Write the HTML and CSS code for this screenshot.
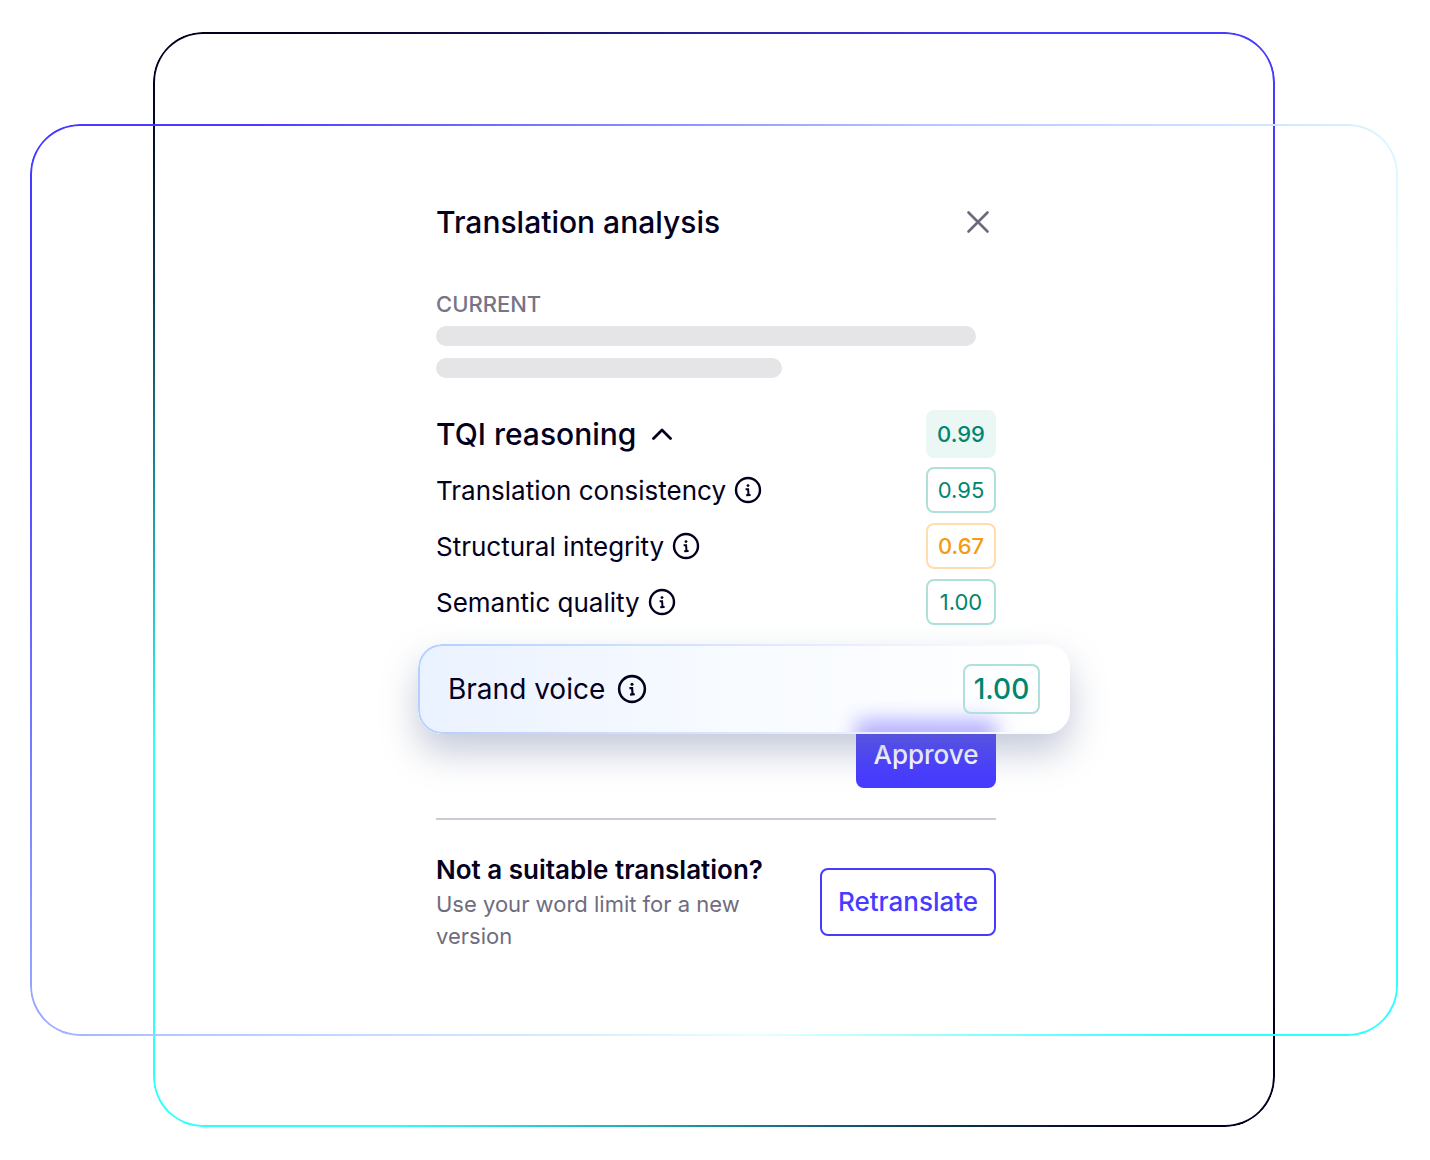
FILE: index.html
```html
<!DOCTYPE html>
<html lang="en">
<head>
  <meta charset="UTF-8">
  <meta name="viewport" content="width=device-width, initial-scale=1.0">
  <title>Translation analysis</title>
  <link rel="stylesheet" href="styles.css">
</head>
<body>

  <!-- Info icon, reused by every score row -->
  <svg class="sprite" aria-hidden="true">
    <symbol id="icon-info" viewBox="0 0 28 28">
      <circle cx="14" cy="14" r="12" fill="none" stroke="currentColor" stroke-width="2.4" />
      <circle cx="14" cy="9.6" r="1.4" fill="currentColor" />
      <path d="M11.6 13.2h2.5l.4 5.8M12.2 19.2l4.4-.3" fill="none" stroke="currentColor" stroke-width="2" />
    </symbol>
  </svg>

  <main class="stage">
    <div class="frame frame-tall"></div>
    <div class="frame frame-wide"></div>

    <section class="panel">
      <header class="panel-header">
        <h1>Translation analysis</h1>
        <button class="icon-button" type="button" aria-label="Close">
          <svg class="icon-close" viewBox="0 0 24 24"><path d="M2.5 2.5l19 19M21.5 2.5l-19 19" /></svg>
        </button>
      </header>

      <!-- Current translation -->
      <h2 class="label">CURRENT</h2>
      <div class="skeleton">
        <span class="bar bar-long"></span>
        <span class="bar bar-short"></span>
      </div>

      <!-- Scores -->
      <div class="row row-total">
        <h2>
          <button class="toggle" type="button" aria-expanded="true">
            TQI reasoning
            <svg class="icon-chevron" viewBox="0 0 20 12"><path d="M1.5 10.5L10 2l8.5 8.5" /></svg>
          </button>
        </h2>
        <span class="score score-total">0.99</span>
      </div>
      <ul class="scores">
        <li class="row">
          <span>Translation consistency</span>
          <button class="icon-button" type="button" aria-label="About translation consistency"><svg class="icon-info"><use href="#icon-info" /></svg></button>
          <span class="score">0.95</span>
        </li>
        <li class="row">
          <span>Structural integrity</span>
          <button class="icon-button" type="button" aria-label="About structural integrity"><svg class="icon-info"><use href="#icon-info" /></svg></button>
          <span class="score score-warning">0.67</span>
        </li>
        <li class="row">
          <span>Semantic quality</span>
          <button class="icon-button" type="button" aria-label="About semantic quality"><svg class="icon-info"><use href="#icon-info" /></svg></button>
          <span class="score">1.00</span>
        </li>
        <li class="row row-highlight">
          <span>Brand voice</span>
          <button class="icon-button" type="button" aria-label="About brand voice"><svg class="icon-info"><use href="#icon-info" /></svg></button>
          <span class="score">1.00</span>
        </li>
      </ul>

      <button class="button button-primary" type="button">Approve</button>

      <!-- Retranslate -->
      <footer class="panel-footer">
        <div class="hint">
          <h3>Not a suitable translation?</h3>
          <p>Use your word limit for a new version</p>
        </div>
        <button class="button button-outline" type="button">Retranslate</button>
      </footer>
    </section>
  </main>

</body>
</html>
```
FILE: styles.css
```css
* {
  box-sizing: border-box;
}

body {
  margin: 0;
  font-family: Inter, "Liberation Sans", sans-serif;
  color: #03001e;
  background: #fff;
}

h1, h2, h3, p, ul {
  margin: 0;
  padding: 0;
}

button {
  font: inherit;
  color: inherit;
  background: none;
  border: 0;
  padding: 0;
  cursor: pointer;
}

.sprite {
  display: none;
}

/* Stage with the two crossing outlines */
.stage {
  display: grid;
  grid-template-columns: 123px 1fr 123px;
  grid-template-rows: 92px auto 91px;
  padding: 32px 32px 32px 30px;
}

.frame {
  padding: 2px;
  border-radius: 50px;
  mask: linear-gradient(#000 0 0) content-box exclude, linear-gradient(#000 0 0);
  pointer-events: none;
}

.frame-tall {
  grid-area: 1 / 2 / 4 / 3;
  background: conic-gradient(from 45deg, #473bff 0%, #473bff 5%, #03001e 23%, #03001e 27%, #2fffff 46%, #2fffff 58%, #03001e 74%, #03001e 77%, #473bff 96%);
}

.frame-wide {
  grid-area: 2 / 1 / 3 / 4;
  background: linear-gradient(130deg, #473bff 10%, #b0c8ff 42%, #e6ffff 70%, #2fffff 90%);
}

/* Panel */
.panel {
  grid-area: 2 / 2 / 3 / 3;
  justify-self: center;
  display: flex;
  flex-direction: column;
  width: 100%;
  max-width: 564px;
  padding: 78px 0 84px 4px;
}

.panel-header {
  display: flex;
  justify-content: space-between;
  align-items: center;
  height: 40px;
  padding-right: 6px;
}

h1 {
  font-size: 30px;
  font-weight: 500;
}

.icon-button {
  display: flex;
}

.icon-close {
  width: 24px;
  height: 24px;
  fill: none;
  stroke: #6b697b;
  stroke-width: 2.6;
  stroke-linecap: round;
}

.label {
  margin-top: 46px;
  font-size: 22px;
  font-weight: 500;
  line-height: 32px;
  color: #777388;
}

.skeleton {
  display: flex;
  flex-direction: column;
  gap: 12px;
  margin-top: 6px;
}

.bar {
  height: 20px;
  border-radius: 10px;
  background: #e5e5e8;
}

.bar-long {
  width: 540px;
}

.bar-short {
  width: 346px;
}

/* Scores */
.scores {
  display: flex;
  flex-direction: column;
  gap: 10px;
  margin-top: 9px;
  list-style: none;
}

.row {
  display: flex;
  align-items: center;
  gap: 8px;
  font-size: 26px;
}

.row-total {
  margin-top: 32px;
}

.row-total h2 {
  font-size: 30px;
  font-weight: 500;
}

.toggle {
  display: flex;
  align-items: center;
  gap: 16px;
}

.icon-chevron {
  width: 20px;
  height: 12px;
  fill: none;
  stroke: currentColor;
  stroke-width: 2.8;
  stroke-linecap: round;
  stroke-linejoin: round;
}

.icon-info {
  width: 28px;
  height: 28px;
}

.score {
  display: flex;
  justify-content: center;
  align-items: center;
  width: 70px;
  height: 46px;
  margin-left: auto;
  border: 2px solid #b0e0da;
  border-radius: 8px;
  font-size: 22px;
  color: #008670;
}

.score-total {
  height: 48px;
  border: 0;
  background: #ebf7f5;
  font-weight: 500;
}

.score-warning {
  border-color: #ffddb0;
  color: #f59a14;
  font-weight: 500;
}

.row-highlight {
  position: relative;
  z-index: 1;
  gap: 12px;
  height: 90px;
  margin: 9px -74px 0 -18px;
  padding: 0 30px;
  border-radius: 24px;
  overflow: hidden;
  background: linear-gradient(90deg, #ebf2ff, #f8fbff 50%, #fff);
  box-shadow: 0 18px 36px rgba(114, 128, 164, 0.42);
  font-size: 28px;
}

/* Fading outline of the highlighted row */
.row-highlight::before {
  content: "";
  position: absolute;
  inset: 0;
  padding: 2px;
  border-radius: inherit;
  background: linear-gradient(90deg, #b5cfff, #e3ebff 60%, #fff);
  mask: linear-gradient(#000 0 0) content-box exclude, linear-gradient(#000 0 0);
  pointer-events: none;
}

/* Glow of the button that sits under the row */
.row-highlight::after {
  content: "";
  position: absolute;
  z-index: -1;
  right: 74px;
  bottom: -14px;
  width: 140px;
  height: 28px;
  background: #473bff;
  filter: blur(10px);
  opacity: 0.4;
}

.row-highlight .icon-info {
  width: 30px;
  height: 30px;
}

.row-highlight .score {
  width: 77px;
  height: 50px;
  font-size: 28px;
  font-weight: 500;
}

/* Buttons */
.button {
  height: 68px;
  border-radius: 8px;
  font-size: 26px;
  font-weight: 500;
}

.button-primary {
  align-self: flex-end;
  width: 140px;
  margin-top: -14px;
  background: #473bff;
  color: #fff;
}

.button-outline {
  width: 176px;
  padding-bottom: 2px;
  border: 2px solid #473bff;
  color: #473bff;
}

/* Footer */
.panel-footer {
  display: flex;
  justify-content: space-between;
  align-items: center;
  margin-top: 30px;
  padding-top: 32px;
  border-top: 2px solid #cccad3;
}

.hint {
  max-width: 340px;
}

.hint h3 {
  font-size: 26px;
  font-weight: 600;
  line-height: 36px;
}

.hint p {
  font-size: 22px;
  line-height: 32px;
  color: #6f6c80;
}
```
